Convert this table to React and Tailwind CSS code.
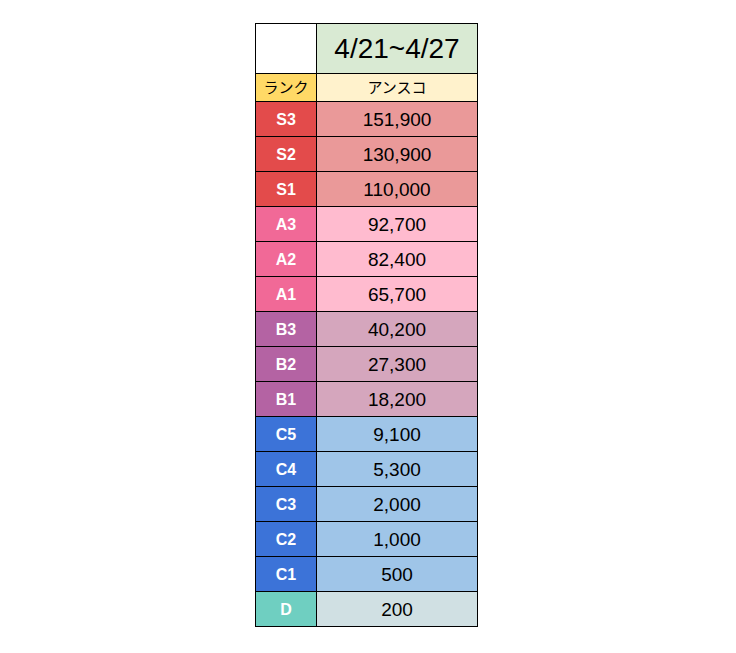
import { Fragment } from "react";

const rows = [
  ["S3", "151,900", "bg-[#e34b4b]", "bg-[#ea9999]"],
  ["S2", "130,900", "bg-[#e34b4b]", "bg-[#ea9999]"],
  ["S1", "110,000", "bg-[#e34b4b]", "bg-[#ea9999]"],
  ["A3", "92,700", "bg-[#f16997]", "bg-[#ffbbcf]"],
  ["A2", "82,400", "bg-[#f16997]", "bg-[#ffbbcf]"],
  ["A1", "65,700", "bg-[#f16997]", "bg-[#ffbbcf]"],
  ["B3", "40,200", "bg-[#b463a3]", "bg-[#d5a6bd]"],
  ["B2", "27,300", "bg-[#b463a3]", "bg-[#d5a6bd]"],
  ["B1", "18,200", "bg-[#b463a3]", "bg-[#d5a6bd]"],
  ["C5", "9,100", "bg-[#3c73d8]", "bg-[#9fc5e8]"],
  ["C4", "5,300", "bg-[#3c73d8]", "bg-[#9fc5e8]"],
  ["C3", "2,000", "bg-[#3c73d8]", "bg-[#9fc5e8]"],
  ["C2", "1,000", "bg-[#3c73d8]", "bg-[#9fc5e8]"],
  ["C1", "500", "bg-[#3c73d8]", "bg-[#9fc5e8]"],
  ["D", "200", "bg-[#6fcfc1]", "bg-[#d0e0e3]"],
];

export default function App() {
  return (
    <div className="w-[736px] h-[653px] bg-white pt-[23px] pl-[255px] font-['Liberation_Sans','Noto_Sans_CJK_JP',sans-serif] text-black">
      <div className="grid grid-cols-[60px_160px] grid-rows-[49px_27px_repeat(15,34px)] gap-px bg-black p-px w-[223px]">
        <div className="bg-white" />
        <div className="bg-[#d9ead3] flex items-center justify-center text-[28px]">4/21~4/27</div>
        <div className="bg-[#ffd966] flex items-center justify-center text-[15px] font-['Noto_Sans_CJK_JP',sans-serif]">ランク</div>
        <div className="bg-[#fff2cc] flex items-center justify-center text-[15px] font-['Noto_Sans_CJK_JP',sans-serif]">アンスコ</div>
        {rows.map(([r, v, c1, c2]) => (
          <Fragment key={r}>
            <div className={`${c1} flex items-center justify-center pt-[2px] text-white font-bold text-[16px]`}>{r}</div>
            <div className={`${c2} flex items-center justify-center pt-[2px] text-[19px]`}>{v}</div>
          </Fragment>
        ))}
      </div>
    </div>
  );
}
